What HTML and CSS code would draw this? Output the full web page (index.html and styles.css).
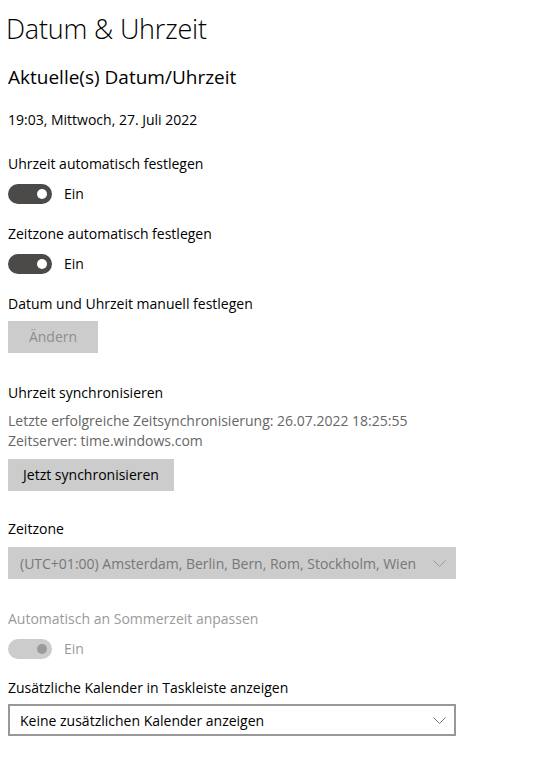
FILE: index.html
```
<!DOCTYPE html>
<html lang="de">
<head>
<meta charset="utf-8">
<title>Datum &amp; Uhrzeit</title>
<link rel="stylesheet" href="styles.css">
</head>
<body>
<main class="page">
  <h1 class="title">Datum &amp; Uhrzeit</h1>
  <h2 class="subtitle">Aktuelle(s) Datum/Uhrzeit</h2>
  <p class="now">19:03, Mittwoch, 27. Juli 2022</p>

  <section class="setting s-auto-time">
    <div class="label">Uhrzeit automatisch festlegen</div>
    <div class="toggle-row">
      <span class="toggle on"><span class="knob"></span></span>
      <span class="toggle-text">Ein</span>
    </div>
  </section>

  <section class="setting s-auto-zone">
    <div class="label">Zeitzone automatisch festlegen</div>
    <div class="toggle-row">
      <span class="toggle on"><span class="knob"></span></span>
      <span class="toggle-text">Ein</span>
    </div>
  </section>

  <section class="setting s-manual">
    <div class="label">Datum und Uhrzeit manuell festlegen</div>
    <button class="btn disabled" type="button">Ändern</button>
  </section>

  <section class="setting s-sync">
    <div class="label">Uhrzeit synchronisieren</div>
    <div class="info first">Letzte erfolgreiche Zeitsynchronisierung: 26.07.2022 18:25:55</div>
    <div class="info">Zeitserver: time.windows.com</div>
    <button class="btn sync" type="button">Jetzt synchronisieren</button>
  </section>

  <section class="setting s-zone">
    <div class="label">Zeitzone</div>
    <div class="select disabled">
      <span class="select-text">(UTC+01:00) Amsterdam, Berlin, Bern, Rom, Stockholm, Wien</span>
      <svg class="chev" width="13" height="7" viewBox="0 0 13 7"><path d="M0.5 0.5 L6.5 6.5 L12.5 0.5" fill="none" stroke="currentColor" stroke-width="1"/></svg>
    </div>
  </section>

  <section class="setting s-dst">
    <div class="label muted">Automatisch an Sommerzeit anpassen</div>
    <div class="toggle-row">
      <span class="toggle on dis"><span class="knob"></span></span>
      <span class="toggle-text muted">Ein</span>
    </div>
  </section>

  <section class="setting s-cal">
    <div class="label">Zusätzliche Kalender in Taskleiste anzeigen</div>
    <div class="select bordered">
      <span class="select-text">Keine zusätzlichen Kalender anzeigen</span>
      <svg class="chev" width="13" height="7" viewBox="0 0 13 7"><path d="M0.5 0.5 L6.5 6.5 L12.5 0.5" fill="none" stroke="currentColor" stroke-width="1"/></svg>
    </div>
  </section>
</main>
</body>
</html>
```

FILE: styles.css
```
* { box-sizing: border-box; }
html, body { margin: 0; padding: 0; background: #fff; }
body {
  font-family: "Open Sans", "Noto Sans", "Liberation Sans", sans-serif;
  color: #000;
  font-size: 14px;
}
.page { padding: 0 0 0 8px; width: 535px; }
.title {
  margin: 0;
  padding-top: 11px;
  font-size: 27px;
  font-weight: 300;
  line-height: 36px;
  margin-left: -2px;
  letter-spacing: -0.2px;
}
.subtitle {
  margin: 0;
  padding-top: 17px;
  font-size: 19px;
  font-weight: 400;
  line-height: 26px;
}
.now {
  margin: 0;
  padding-top: 20px;
  line-height: 20px;
  font-size: 14px;
}
.setting { display: flex; flex-direction: column; align-items: flex-start; }
.label { font-size: 14px; line-height: 20px; }
.s-auto-time { padding-top: 24px; }
.s-auto-zone { padding-top: 20px; }
.s-manual { padding-top: 20px; }
.s-sync { padding-top: 30px; }
.s-zone { padding-top: 28px; }
.s-dst { padding-top: 30px; }
.s-cal { padding-top: 19px; }
.toggle-row { display: flex; align-items: center; gap: 12px; margin-top: 10px; height: 20px; }
.toggle {
  width: 44px; height: 20px; border-radius: 10px; background: #4c4a48;
  display: flex; align-items: center; justify-content: flex-end; padding-right: 5px;
}
.knob { width: 10px; height: 10px; border-radius: 50%; background: #fff; }
.toggle.dis { background: #cccccc; }
.toggle.dis .knob { background: #9a9a9a; }
.toggle-text { font-size: 14px; line-height: 20px; }
.muted { color: #9a9a9a; }
.btn {
  font-family: inherit; font-size: 14px; line-height: 20px;
  border: none; background: #cccccc; color: #000;
  height: 32px; padding: 0 14px; margin-top: 7px; border-radius: 0;
}
.btn.disabled { color: #8e8e8e; width: 90px; }
.info { font-size: 14px; line-height: 20px; color: #666; }
.info.first { margin-top: 8px; }
.btn.sync { margin-top: 8px; width: 166px; }
.select {
  width: 448px; height: 32px; margin-top: 8px;
  display: flex; align-items: center; justify-content: space-between;
  padding: 0 10px 0 12px; font-size: 14px;
}
.select.disabled { background: #cccccc; color: #777; }
.select.disabled .chev { color: #999; }
.select.bordered { border: 2px solid #999; background: #fff; padding-left: 10px; padding-right: 8px; margin-top: 6px; }
.select.bordered .chev { color: #777; }
.chev { flex: none; }
```
